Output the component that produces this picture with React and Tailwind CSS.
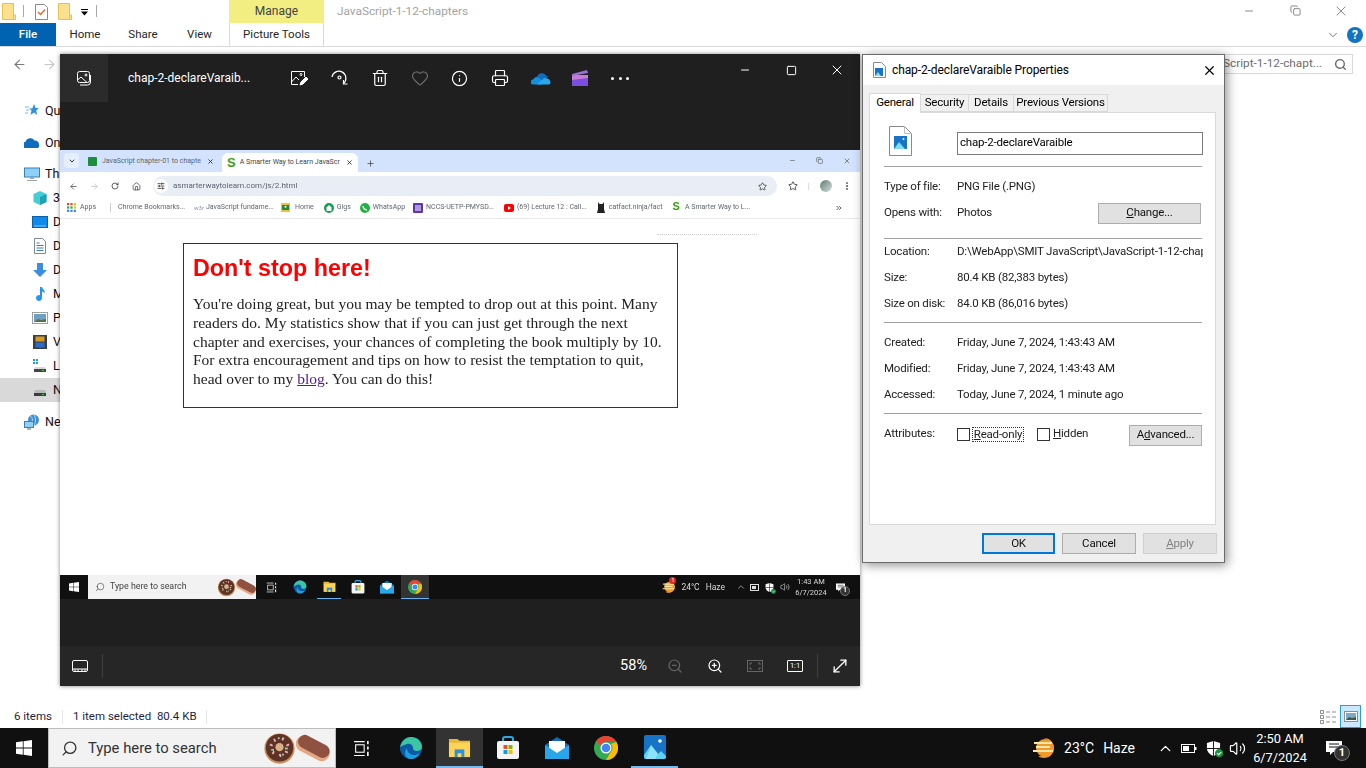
import { ArrowLeft, ArrowRight, Search, ChevronUp, ChevronDown, X, Minus, Square, Copy, RotateCw, House, Star, Plus, EllipsisVertical, ChevronsRight, Trash2, Heart, Info, Printer, ZoomIn, ZoomOut, MoveDiagonal, Volume2, SlidersHorizontal } from 'lucide-react';

const ui = "font-['Roboto',sans-serif]";

const navRows = [
  { label: 'Quick access', y: 'mt-[8px]', pad: 'pl-[24px]', icon: 'star' },
  { label: 'OneDrive', y: 'mt-[8px]', pad: 'pl-[24px]', icon: 'cloud' },
  { label: 'This PC', y: 'mt-[7px]', pad: 'pl-[24px]', icon: 'pc' },
  { label: '3D Objects', pad: 'pl-[32px]', icon: 'cube' },
  { label: 'Desktop', pad: 'pl-[32px]', icon: 'desktop' },
  { label: 'Documents', pad: 'pl-[32px]', icon: 'doc' },
  { label: 'Downloads', pad: 'pl-[32px]', icon: 'down' },
  { label: 'Music', pad: 'pl-[32px]', icon: 'music' },
  { label: 'Pictures', pad: 'pl-[32px]', icon: 'pics' },
  { label: 'Videos', pad: 'pl-[32px]', icon: 'video' },
  { label: 'Local Disk (C:)', pad: 'pl-[32px]', icon: 'local' },
  { label: 'New Volume (D:)', pad: 'pl-[32px]', icon: 'disk', active: true },
  { label: 'Network', y: 'mt-[8px]', pad: 'pl-[24px]', icon: 'net' },
];

function NavIcon({ name }) {
  const p = { width: 16, height: 16, viewBox: '0 0 16 16', className: 'shrink-0' };
  if (name === 'star') return <svg {...p}><path d="M10 1l1.600 4H15l-2.800 2.600 1 4.400L10 9.600 6.500 12l1-4.400L5 5.500h3.300z" fill="#2f8fe0" /><path d="M1 4h4M2 7h3M1 10h3" stroke="#7cb9ee" /></svg>;
  if (name === 'cloud') return <svg {...p}><path d="M1 13a3 3 0 0 1 .5-6 5 5 0 0 1 9-1.500A4 4 0 0 1 15 9.500 3 3 0 0 1 14 13z" fill="#0f6cbd" /></svg>;
  if (name === 'pc') return <svg {...p}><rect x="0.500" y="2" width="15" height="9" fill="#8fd0f5" stroke="#3a7fb5" /><path d="M6 11h4v2H6zM3 14h10v1H3z" fill="#9aa5ad" /></svg>;
  if (name === 'cube') return <svg {...p}><path d="M8 1l6.500 3v8L8 15l-6.500-3V4z" fill="#45cdd6" /><path d="M8 7l6.500-3v8L8 15z" fill="#1ea3b5" /></svg>;
  if (name === 'desktop') return <svg {...p}><rect x="0.500" y="2.500" width="15" height="11" fill="#0f8ae8" stroke="#0b5fa8" /><path d="M2 12h12" stroke="#7cc4f5" /></svg>;
  if (name === 'doc') return <svg {...p}><path d="M2.500.500h8l3 3v12h-11z" fill="#fff" stroke="#7d8a94" /><path d="M4.500 5h3M4.500 7.500h7M4.500 10h7M4.500 12.500h7" stroke="#3a7fb5" /></svg>;
  if (name === 'down') return <svg {...p}><path d="M5 1h6v7h4l-7 7-7-7h4z" fill="#3a8ee0" /></svg>;
  if (name === 'music') return <svg {...p}><path d="M8 1h2c.5 2.500 3 3 3 6-1-1-2-1.500-3-1.500V12a3 3 0 1 1-2-2.800z" fill="#2196f3" /></svg>;
  if (name === 'pics') return <svg {...p}><rect x="0.500" y="2.500" width="15" height="11" fill="#fff" stroke="#9aa0a6" /><rect x="2" y="4" width="12" height="8" fill="#6f9fc2" /><path d="M2 12l4-3 3 1 5-1v3z" fill="#55724a" /></svg>;
  if (name === 'video') return <svg {...p}><rect x="1" y="1" width="14" height="14" fill="#3b3f44" /><rect x="3.500" y="2.500" width="9" height="5" fill="#d89a22" /><rect x="3.500" y="8.500" width="9" height="5" fill="#2d6cc9" /></svg>;
  if (name === 'local') return <svg {...p}><path d="M1 1h2v2H1zM4 1h2v2H4zM1 4h2v2H1zM4 4h2v2H4z" fill="#1e9be8" /><path d="M3 9h10l1 2H2z" fill="#d8dadc" /><rect x="2" y="11" width="12" height="3" fill="#454545" /><rect x="10" y="12" width="2" height="1" fill="#3bd13b" /></svg>;
  if (name === 'disk') return <svg {...p}><path d="M3 8h10l1 3H2z" fill="#b8babc" /><rect x="2" y="11" width="12" height="3" fill="#3d3d3d" /><rect x="10" y="12" width="2" height="1" fill="#3bd13b" /></svg>;
  return <svg {...p}><circle cx="9.500" cy="6" r="5.500" fill="#3f8fd0" /><path d="M6 2c3 1 3 6 1 9M10 1c2 3 2 7 0 10" stroke="#b7dcf5" fill="none" /><rect x="0.500" y="7.500" width="9" height="6" fill="#8fd0f5" stroke="#3a7fb5" /><path d="M3 15h4" stroke="#666" /></svg>;
}

function FolderIcon({ className }) {
  return (
    <svg className={className} width="14" height="17" viewBox="0 0 14 17">
      <path d="M.5.500h11v16H.5z" fill="#fbe08f" stroke="#e8c24f" />
      <path d="M11.500 12h2v4.500h-2z" fill="#fbe08f" stroke="#e8c24f" />
    </svg>
  );
}

function Explorer() {
  return (
    <div className={`flex h-[728px] flex-col bg-white ${ui}`}>
      {/* title row */}
      <div className="flex h-[23px] items-start">
        <FolderIcon className="mt-[3px] ml-[2px]" />
        <div className="mt-[5px] ml-[7px] h-[12px] w-px bg-[#a8a8a8]" />
        <svg className="mt-[4px] ml-[11px]" width="13" height="16" viewBox="0 0 13 16">
          <path d="M.5.500h9l3 3v12H.5z" fill="#fff" stroke="#8a8a8a" />
          <path d="M3 8l2.500 2.500L10 5.500" fill="none" stroke="#e2622c" strokeWidth="1.300" />
        </svg>
        <FolderIcon className="mt-[3px] ml-[10px]" />
        <svg className="mt-[9px] ml-[9px]" width="8" height="7" viewBox="0 0 8 7">
          <path d="M0 0h7v1H0zM0 2.500h7L3.500 6.500z" fill="#000" />
        </svg>
        <div className="mt-[5px] ml-[7px] h-[12px] w-px bg-[#a8a8a8]" />
        <div className="ml-[132px] flex h-[23px] w-[95px] items-center justify-center bg-[#f2ee82] pb-[2px] text-[12px] text-[#444]">Manage</div>
        <div className="mt-[3px] ml-[13px] text-[11.800px] text-[#a3a3a3]">JavaScript-1-12-chapters</div>
        <div className="ml-auto mr-[2px] flex items-center text-[#8a8a8a]">
          <div className="flex h-[21px] w-[46px] items-center justify-center"><Minus size={12} strokeWidth={1} absoluteStrokeWidth /></div>
          <div className="flex h-[21px] w-[46px] items-center justify-center"><Copy size={11} strokeWidth={1} absoluteStrokeWidth /></div>
          <div className="flex h-[21px] w-[46px] items-center justify-center"><X size={16} strokeWidth={1} absoluteStrokeWidth /></div>
        </div>
      </div>
      {/* ribbon tabs */}
      <div className="flex h-[24px] items-center border-b border-[#dadada] text-[11.500px] text-[#262626]">
        <div className="flex h-[23px] w-[56px] items-center justify-center bg-[#0063b1] font-medium text-white">File</div>
        <div className="w-[58px] text-center">Home</div>
        <div className="w-[58px] text-center">Share</div>
        <div className="w-[55px] text-center">View</div>
        <div className="ml-[2px] flex h-[23px] w-[95px] items-center justify-center border-x border-[#dadada]">Picture Tools</div>
        <div className="ml-auto mr-[3px] flex items-center gap-[7px]">
          <ChevronDown size={14} strokeWidth={1} absoluteStrokeWidth color="#777" />
          <div className="flex h-[16px] w-[16px] items-center justify-center rounded-full bg-[#1273c4] text-[12px] font-bold text-white">?</div>
        </div>
      </div>
      {/* address row */}
      <div className="flex h-[34px] items-center">
        <ArrowLeft className="ml-[12px]" size={15} color="#7a7a7a" strokeWidth={1.800} />
        <ArrowRight className="ml-[15px]" size={15} color="#c8c8c8" strokeWidth={1.800} />
        <div className="mr-[13px] ml-auto flex h-[20px] w-[201px] items-center justify-between border border-[#d9d9d9] px-[5px] text-[11.800px] text-[#6d6d6d]">
          <span className="ml-[65px] whitespace-nowrap">Script-1-12-chapt...</span>
          <Search size={13} strokeWidth={2.500} color="#666" />
        </div>
      </div>
      {/* body */}
      <div className="flex min-h-0 flex-1">
        <div className="w-[220px] overflow-hidden pt-[10px] text-[12.500px] text-[#1a0a0a]">
          {navRows.map((r) => (
            <div key={r.label} className={`flex h-[24px] items-center gap-[5px] ${r.pad} ${r.y || ''} ${r.active ? 'bg-[#d9d9d9]' : ''}`}>
              <NavIcon name={r.icon} />
              <span className="whitespace-nowrap">{r.label}</span>
            </div>
          ))}
        </div>
      </div>
      {/* status bar */}
      <div className="flex h-[23px] items-center text-[11.500px] text-[#1f1f3f]">
        <span className="ml-[14px] w-[48px]">6 items</span>
        <div className="h-[14px] w-px bg-[#e6e6e6]" />
        <span className="ml-[10px] w-[133px] whitespace-nowrap">1 item selected&nbsp; 80.4 KB</span>
        <div className="h-[14px] w-px bg-[#e6e6e6]" />
        <div className="ml-auto flex items-center">
          <svg width="17" height="14" viewBox="0 0 17 14">
            <path d="M.5.500h3v3h-3zM.5 5.500h3v3h-3zM.5 10.500h3v3h-3z" fill="none" stroke="#8d8d8d" />
            <path d="M6 2h4M12 2h4M6 7h4M12 7h4M6 12h4M12 12h4" stroke="#8d8d8d" />
          </svg>
          <div className="mr-[5px] ml-[3px] flex h-[23px] w-[21px] items-center justify-center border border-[#26a0da] bg-[#cce8ff]">
            <svg width="14" height="11" viewBox="0 0 14 11">
              <rect x=".5" y=".5" width="13" height="10" fill="#fff" stroke="#8d8d8d" />
              <rect x="2" y="2" width="10" height="7" fill="#7fa9c4" />
              <path d="M2 9l3-3 3 1 4-1v3z" fill="#3f5a48" />
            </svg>
          </div>
        </div>
      </div>
    </div>
  );
}

function ImageIcon() {
  return (
    <svg width="16" height="16" viewBox="0 0 16 16" fill="none" stroke="#fff">
      <rect x="1.500" y="1.500" width="12" height="11" rx="2" />
      <circle cx="10" cy="5" r="1" />
      <path d="M1.500 10l3.500-3 6 5.500M14.500 5v7a3 3 0 0 1-3 3H4" />
    </svg>
  );
}

function BlueS({ size = 12 }) {
  return <span className="font-['Liberation_Sans',sans-serif] font-bold leading-none text-[#3aa00f]" style={{ fontSize: size }}>S</span>;
}

function BookmarkIcon({ kind }) {
  if (kind === 'home') return (
    <svg width="9" height="9" viewBox="0 0 9 9"><rect width="9" height="9" fill="#f3c22c" /><rect x="1" y="2" width="7" height="5" fill="#1e8e3e" /><circle cx="4.500" cy="3.800" r="1" fill="#fff" /></svg>
  );
  if (kind === 'gigs') return (
    <svg width="10" height="10" viewBox="0 0 10 10"><circle cx="5" cy="5" r="5" fill="#12a150" /><path d="M5 2l2.500 2.500V8h-5V4.500z" fill="#fff" /></svg>
  );
  if (kind === 'wa') return (
    <svg width="10" height="10" viewBox="0 0 10 10"><circle cx="5" cy="5" r="5" fill="#1fb141" /><path d="M3 3c0 2 2 4 4 4" stroke="#fff" strokeWidth="1.300" fill="none" /></svg>
  );
  if (kind === 'nccs') return (
    <svg width="10" height="10" viewBox="0 0 10 10"><rect width="10" height="10" rx="1" fill="#5e35b1" /><path d="M2 3h6M2 5h6M2 7h6" stroke="#fff" /></svg>
  );
  if (kind === 'yt') return (
    <svg width="10" height="8" viewBox="0 0 10 8"><rect width="10" height="8" rx="2" fill="#f00" /><path d="M4 2l3 2-3 2z" fill="#fff" /></svg>
  );
  return (
    <svg width="8" height="11" viewBox="0 0 8 11"><path d="M1 0l1.500 2h3L7 0v7l1 4H0l1-4z" fill="#222" /></svg>
  );
}

const bookmarks = [
  { t: 'Home', k: 'home', w: 'ml-[9px]', g: 'mr-[5px]' },
  { t: 'Gigs', k: 'gigs', w: 'ml-[10px]', g: 'mr-[3px]' },
  { t: 'WhatsApp', k: 'wa', w: 'ml-[9px]', g: 'mr-[3px]' },
  { t: 'NCCS-UETP-PMYSD...', k: 'nccs', w: 'ml-[8px]', g: 'mr-[3px]' },
  { t: '(69) Lecture 12 : Call...', k: 'yt', w: 'ml-[10px]', g: 'mr-[3px]' },
  { t: 'catfact.ninja/fact', k: 'cat', w: 'ml-[10px]', g: 'mr-[4px]' },
];

function ChromeShot() {
  return (
    <div className="flex flex-col bg-white">
      <div className="flex flex-col blur-[0.3px]">
        <div className="flex h-[22px] items-end bg-[#d3e3fd] pl-[4px] text-[7px] whitespace-nowrap text-[#5a6470]">
          <div className="mb-[4px] flex h-[15px] w-[15px] items-center justify-center rounded-[4px] bg-[#e6eefc]"><ChevronDown size={8} color="#333" strokeWidth={3} /></div>
          <div className="mb-[3px] flex h-[15px] w-[143px] items-center pr-[8px] pl-[9px]">
            <span className="mr-[5px] h-[9px] w-[9px] shrink-0 rounded-[1px] bg-[#1e8e3e]" />
            <span>JavaScript chapter-01 to chapte</span>
            <X className="ml-auto shrink-0" size={7} color="#333" strokeWidth={3} />
          </div>
          <div className="flex h-[19px] w-[136px] items-center rounded-t-[6px] bg-white pr-[5px] pl-[5px] text-[#444]">
            <BlueS size={13} />
            <span className="ml-[4px]">A Smarter Way to Learn JavaScr</span>
            <X className="ml-auto shrink-0" size={7} color="#333" strokeWidth={3} />
          </div>
          <Plus className="mb-[4px] ml-[8px]" size={9} color="#444" strokeWidth={2} />
          <div className="mb-[4px] ml-auto flex h-[15px] items-center text-[#555]">
            <Minus size={7} strokeWidth={2} />
            <Copy className="ml-[20px]" size={7} strokeWidth={2} />
            <X className="mr-[9px] ml-[20px]" size={8} strokeWidth={2} />
          </div>
        </div>
        <div className="flex h-[24px] items-center pt-[4px] text-[#444]">
          <ArrowLeft className="ml-[9px]" size={9} strokeWidth={2} />
          <ArrowRight className="ml-[12px]" size={9} color="#bbb" strokeWidth={2} />
          <RotateCw className="ml-[12px]" size={8} strokeWidth={2.500} />
          <House className="ml-[13px]" size={9} strokeWidth={2} />
          <div className="ml-[12px] flex h-[20px] w-[624px] items-center rounded-full bg-[#e9edf6] pr-[10px] pl-[1px] text-[8px] text-[#5c6470]">
            <span className="mr-[5px] flex h-[14px] w-[14px] items-center justify-center rounded-full bg-white"><SlidersHorizontal size={8} color="#333" strokeWidth={2.500} /></span>
            <span>asmarterwaytolearn.com/js/2.html</span>
            <Star className="ml-auto" size={9} color="#333" strokeWidth={2} />
          </div>
          <Star className="ml-[11px]" size={10} color="#333" strokeWidth={2} />
          <div className="ml-[10px] h-[7px] w-px bg-[#d5dfee]" />
          <div className="ml-[11px] h-[12px] w-[12px] rounded-full bg-gradient-to-br from-[#5f7d6b] to-[#d8dfe6]" />
          <EllipsisVertical className="ml-[10px]" size={10} strokeWidth={2.500} />
        </div>
        <div className="flex h-[23px] items-center border-b border-[#e8e8e8] pt-[2px] pb-[1px] pl-[7px] text-[7px] whitespace-nowrap text-[#5e6670]">
          <svg width="9" height="9" viewBox="0 0 8 8">
            <g fill="#ea4335"><rect width="2" height="2" /><rect x="3" width="2" height="2" /></g>
            <rect x="6" width="2" height="2" fill="#fbbc04" />
            <g fill="#34a853"><rect y="3" width="2" height="2" /><rect x="3" y="3" width="2" height="2" /></g>
            <rect x="6" y="3" width="2" height="2" fill="#fbbc04" />
            <g fill="#4285f4"><rect y="6" width="2" height="2" /><rect x="3" y="6" width="2" height="2" /><rect x="6" y="6" width="2" height="2" /></g>
          </svg>
          <span className="ml-[4px] w-[16px]">Apps</span>
          <div className="ml-[14px] h-[9px] w-px bg-[#ccc]" />
          <span className="ml-[7px] w-[66px]">Chrome Bookmarks...</span>
          <span className="ml-[10px] w-[12px] text-[6px] text-[#8a8fb8]">w3r</span>
          <span className="w-[66px]">JavaScript fundame...</span>
          {bookmarks.map((b) => (
            <span key={b.t} className={`flex items-center ${b.w}`}>
              <span className={`flex ${b.g}`}><BookmarkIcon kind={b.k} /></span>
              {b.t}
            </span>
          ))}
          <span className="mr-[5px] ml-[10px]"><BlueS size={11} /></span>
          <span>A Smarter Way to L...</span>
          <ChevronsRight className="mr-[17px] ml-auto" size={8} color="#444" strokeWidth={2.500} />
        </div>
      </div>
      <div className="relative h-[356px]">
        <div className="absolute top-[15px] left-[597px] w-[100px] border-t border-dotted border-[#cfcfcf]" />
        <div className="mt-[24px] ml-[123px] w-[495px] border border-[#333] pt-[9px] pb-[18px] pl-[9px]">
          <div className="font-['Liberation_Sans',sans-serif] text-[23.300px] leading-[30px] font-bold text-[#f00]">Don&apos;t stop here!</div>
          <p className="mt-[12px] font-['Liberation_Serif',serif] text-[15.500px] leading-[18.800px] text-[#222]">
            You&apos;re doing great, but you may be tempted to drop out at this point. Many<br />
            readers do. My statistics show that if you can just get through the next<br />
            chapter and exercises, your chances of completing the book multiply by 10.<br />
            For extra encouragement and tips on how to resist the temptation to quit,<br />
            head over to my <span className="text-[#551a8b] underline">blog</span>. You can do this!
          </p>
        </div>
      </div>
      <MiniTaskbar />
    </div>
  );
}

function Donut({ s = 22 }) {
  return (
    <svg width={s} height={s} viewBox="0 0 24 24">
      <circle cx="12" cy="12" r="11" fill="#c98f5c" />
      <circle cx="12" cy="11.500" r="10" fill="#5c3324" />
      <circle cx="12" cy="11" r="3" fill="#d9b08a" />
      <path d="M5 9l2 1M8 5l1 2M15 4l-1 2M19 9l-2 1M18 15l-2-1M13 18l-1-2M7 16l1-2" stroke="#f4b0c0" strokeWidth="1.300" />
      <path d="M6 13l2 0M11 4l1 1M18 12l-2 0M15 17l-1-1" stroke="#8fd0a0" strokeWidth="1.300" />
    </svg>
  );
}

function Bar({ s = 28 }) {
  return (
    <svg width={s} height={s} viewBox="0 0 28 28">
      <rect x="-1" y="8" width="30" height="13" rx="6.500" transform="rotate(28 14 14)" fill="#e6a884" />
      <rect x="0" y="7" width="28" height="11" rx="5.500" transform="rotate(28 14 14)" fill="#8f5240" />
    </svg>
  );
}

function Edge({ s }) {
  return (
    <svg width={s} height={s} viewBox="0 0 24 24">
      <circle cx="12" cy="12" r="11" fill="#0c59a4" />
      <path d="M1 12C2 5 7 1 12 1c6 0 11 4 11 10 0 3-3 4-5 4-3 0-4-1-4-3 0-3-3-5-6-4-4 1-7 3-7 4z" fill="#3cc5a5" />
      <path d="M8 12c0 4 3 7 7 7 2 0 4-.5 6-2-2 4-6 6-9 6-3 0-6-2-6-6 0-2 1-4 2-5z" fill="#1b9de2" />
    </svg>
  );
}

function ExplorerIcon({ s }) {
  return (
    <svg width={s} height={s} viewBox="0 0 24 24">
      <path d="M1 3h9l2 2h11v3H1z" fill="#e9b73c" />
      <path d="M1 7h22v15H1z" fill="#fbd458" />
      <path d="M7 14h10v8H7z" fill="#2f8fd8" />
      <path d="M10 18h4v4h-4z" fill="#fbd458" />
    </svg>
  );
}

function StoreIcon({ s }) {
  return (
    <svg width={s} height={s} viewBox="0 0 24 24">
      <path d="M7 6V3a2 2 0 0 1 2-2h6a2 2 0 0 1 2 2v3" fill="none" stroke="#29a8e6" strokeWidth="2" />
      <rect x="1" y="5" width="22" height="18" rx="2" fill="#f4f4f4" />
      <rect x="7.500" y="9" width="4" height="4" fill="#f25022" />
      <rect x="12.500" y="9" width="4" height="4" fill="#7fba00" />
      <rect x="7.500" y="14" width="4" height="4" fill="#00a4ef" />
      <rect x="12.500" y="14" width="4" height="4" fill="#ffb900" />
    </svg>
  );
}

function MailIcon({ s }) {
  return (
    <svg width={s} height={s} viewBox="0 0 24 24">
      <path d="M12 1L24 9v14H0V9z" fill="#0f6cbd" />
      <path d="M4 5h16v9l-8 5-8-5z" fill="#fff" />
      <path d="M0 9l12 8 12-8v14H0z" fill="#28a8ea" />
    </svg>
  );
}

function ChromeIcon({ s }) {
  return (
    <svg width={s} height={s} viewBox="0 0 24 24">
      <circle cx="12" cy="12" r="12" fill="#34a853" />
      <path d="M12 0a12 12 0 0 1 10.400 6H12a6 6 0 0 0-5.600 3.800L2.300 5A12 12 0 0 1 12 0z" fill="#ea4335" />
      <path d="M22.400 6A12 12 0 0 1 12 24l5-8.500A6 6 0 0 0 17 8z" fill="#fbbc04" />
      <circle cx="12" cy="12" r="5.500" fill="#fff" />
      <circle cx="12" cy="12" r="4.300" fill="#4285f4" />
    </svg>
  );
}

function PhotosIcon({ s }) {
  return (
    <svg width={s} height={s} viewBox="0 0 24 24">
      <rect x="1" y="0" width="22" height="24" rx="2" fill="#1673c5" />
      <circle cx="17" cy="6" r="1.800" fill="#fff" />
      <path d="M1 20l7-10 7 9 3-3 5 5v1a2 2 0 0 1-2 2H3a2 2 0 0 1-2-2z" fill="#5dd3f3" />
      <path d="M8 10l7 9-3 5H3z" fill="#8ce3fa" />
    </svg>
  );
}

function WinLogo({ s }) {
  return (
    <svg width={s} height={s} viewBox="0 0 16 16" fill="#fff">
      <path d="M0 2.300l6.800-1v6.300H0zM7.600 1.200L16 0v7.600H7.600zM0 8.400h6.800v6.300l-6.800-1zM7.600 8.400H16V16l-8.400-1.200z" />
    </svg>
  );
}

function Weather({ s, badge }) {
  return (
    <span className="relative inline-flex">
      <svg width={s} height={s} viewBox="0 0 24 24">
        <path d="M12 2a10 10 0 1 1-6 18h8A10 10 0 0 0 12 2z" fill="#f09a2a" />
        <circle cx="13" cy="12" r="9" fill="#f09a2a" />
        <path d="M2 7h18M4 11h14M1 15h20" stroke="#fbe6a5" strokeWidth="2" />
      </svg>
      {badge && <span className="absolute -top-[3px] right-0 flex h-[7px] w-[7px] items-center justify-center rounded-full bg-[#d92b2b] text-[5px] text-white">1</span>}
    </span>
  );
}

function Shield({ s }) {
  return (
    <span className="relative inline-flex">
      <svg width={s} height={s} viewBox="0 0 16 16">
        <path d="M8 0l7 2v6c0 4-4 7-7 8-3-1-7-4-7-8V2z" fill="#fff" />
        <path d="M8 0v16M1 8h14" stroke="#101010" />
      </svg>
      <svg className="absolute right-[-2px] bottom-[-2px]" width={s * 0.55} height={s * 0.55} viewBox="0 0 8 8">
        <circle cx="4" cy="4" r="4" fill="#14933f" />
        <path d="M2 4l1.500 1.500L6 3" stroke="#fff" fill="none" />
      </svg>
    </span>
  );
}

function Notify({ s, big }) {
  return (
    <span className="relative inline-flex">
      <svg width={s} height={s} viewBox="0 0 16 16" fill="#fff">
        <path d="M0 1h16v11H7l-3 3v-3H0z" />
        <path d="M3 4h10M3 7h10" stroke="#101010" />
      </svg>
      <span className={`absolute flex items-center justify-center rounded-full border border-[#777] bg-[#333] font-bold text-white ${big ? 'right-[-8px] bottom-[-5px] h-[16px] w-[16px] text-[11px]' : 'right-[-5px] bottom-[-4px] h-[10px] w-[10px] text-[7px]'}`}>1</span>
    </span>
  );
}

function MiniTaskbar() {
  return (
    <div className={`flex h-[24px] items-center bg-[#101010] text-[#d8d8d8] blur-[0.3px] ${ui}`}>
      <div className="flex w-[28px] justify-center"><WinLogo s={10} /></div>
      <div className="flex h-[24px] w-[168px] items-center bg-[#f2f2f2] pl-[7px] text-[8.800px] text-[#444]">
        <Search size={10} strokeWidth={1.500} className="-scale-x-100" />
        <span className="ml-[5px]">Type here to search</span>
        <span className="ml-auto flex items-center"><Donut s={19} /><Bar s={20} /></span>
      </div>
      <div className="ml-[3px] flex w-[24px] justify-center"><TaskView s={11} /></div>
      <div className="ml-[4px] flex w-[26px] justify-center"><Edge s={14} /></div>
      <div className="ml-[4px] flex h-[24px] w-[24px] items-center justify-center border-b border-[#64b5f6]"><ExplorerIcon s={13} /></div>
      <div className="ml-[4px] flex w-[26px] justify-center"><StoreIcon s={14} /></div>
      <div className="ml-[3px] flex w-[26px] justify-center"><MailIcon s={14} /></div>
      <div className="ml-[1px] flex h-[24px] w-[28px] items-center justify-center border-b border-[#64b5f6] bg-[#333]"><ChromeIcon s={14} /></div>
      <div className="ml-auto flex items-center whitespace-nowrap text-[8.500px]">
        <Weather s={14} badge />
        <span className="ml-[5px]">24°C</span>
        <span className="ml-[6px]">Haze</span>
        <ChevronUp className="ml-[11px]" size={10} strokeWidth={1.500} />
        <svg className="ml-[4px]" width="10" height="7" viewBox="0 0 10 7"><rect x=".5" y=".5" width="8" height="6" fill="none" stroke="#ddd" /><rect x="2" y="2" width="4" height="3" fill="#ddd" /></svg>
        <span className="ml-[5px] inline-flex"><Shield s={9} /></span>
        <Volume2 className="ml-[6px]" size={10} strokeWidth={1.500} />
        <div className="ml-[4px] w-[34px] text-center text-[7.500px] leading-[11px]">1:43 AM<br />6/7/2024</div>
        <span className="mr-[15px] ml-[8px] inline-flex"><Notify s={9} /></span>
      </div>
    </div>
  );
}

function TaskView({ s }) {
  return (
    <svg width={s} height={s} viewBox="0 0 16 16" fill="none" stroke="#fff">
      <path d="M1 1.500h10M1 14.500h10" />
      <rect x="2.500" y="4.500" width="8" height="7" />
      <path d="M14 1v3M14 6v3M14 11v4" strokeWidth="1.500" />
    </svg>
  );
}

function PhotoWindow() {
  return (
    <div className={`absolute top-[54px] left-[60px] flex h-[632px] w-[800px] flex-col bg-[#1f1f1f] text-white shadow-[0_0_4px_rgba(0,0,0,0.5)] ${ui}`}>
      <div className="flex h-[48px] shrink-0 items-center">
        <div className="flex h-[48px] w-[48px] items-center justify-center bg-[#2b2b2b]"><ImageIcon /></div>
        <span className="ml-[20px] w-[161px] text-[12px] whitespace-nowrap">chap-2-declareVaraib...</span>
        <div className="flex w-[20px] justify-center">
          <svg width="18" height="18" viewBox="0 0 18 18" fill="none" stroke="#fff">
            <path d="M8 15.500H1.500v-13h13V8" />
            <circle cx="11" cy="5.500" r="1" />
            <path d="M1.500 13L6 8l3 3" />
            <path d="M10 16l1-3 5-5 2 2-5 5z" fill="#fff" />
          </svg>
        </div>
        <div className="ml-[21px] flex w-[20px] justify-center">
          <svg width="18" height="18" viewBox="0 0 18 18" fill="none" stroke="#fff" strokeWidth="1.200">
            <path d="M1 8a7 7 0 1 1 11.500 6.500" />
            <circle cx="8.500" cy="8.500" r="1.500" />
            <path d="M12.500 11v4h4" />
          </svg>
        </div>
        <Trash2 className="ml-[21px]" size={18} strokeWidth={1.200} absoluteStrokeWidth />
        <Heart className="ml-[22px]" size={18} strokeWidth={1.200} absoluteStrokeWidth color="#6a6a6a" />
        <Info className="ml-[22px]" size={17} strokeWidth={1.200} absoluteStrokeWidth />
        <Printer className="ml-[23px]" size={18} strokeWidth={1.200} absoluteStrokeWidth />
        <svg className="ml-[22px]" width="20" height="14" viewBox="0 0 20 14">
          <path d="M6 6a5 5 0 0 1 9-1.500 4 4 0 0 1 2 1.500L8 10z" fill="#0f6cbd" />
          <path d="M2 13.500a2.500 2.500 0 0 1 .5-5C3 6 6 5 8 7l5 3-3 3.500z" fill="#1490df" />
          <path d="M6 13.500L13 7c3-.5 6 1 6.500 4 0 2-1 2.500-2 2.500z" fill="#28a8ea" />
        </svg>
        <svg className="ml-[21px]" width="16" height="16" viewBox="0 0 16 16">
          <rect y="5" width="16" height="11" fill="#7a4fe0" />
          <path d="M0 5h16v3L0 10z" fill="#c77bd8" />
          <path d="M0 4L15 0l1 3L0 6z" fill="#9b6fd8" />
        </svg>
        <div className="ml-[23px] flex w-[18px] justify-between">
          <span className="h-[3px] w-[3px] rounded-full bg-white" />
          <span className="h-[3px] w-[3px] rounded-full bg-white" />
          <span className="h-[3px] w-[3px] rounded-full bg-white" />
        </div>
        <div className="ml-auto flex self-start">
          <div className="flex h-[32px] w-[46px] items-center justify-center"><Minus size={12} strokeWidth={1} absoluteStrokeWidth /></div>
          <div className="flex h-[32px] w-[46px] items-center justify-center"><Square size={11} strokeWidth={1} absoluteStrokeWidth /></div>
          <div className="flex h-[32px] w-[46px] items-center justify-center"><X size={16} strokeWidth={1} absoluteStrokeWidth /></div>
        </div>
      </div>
      <div className="h-[48px] shrink-0" />
      <div className="shrink-0"><ChromeShot /></div>
      <div className="min-h-0 flex-1" />
      <div className="flex h-[40px] shrink-0 items-center bg-[#262626]">
        <svg className="ml-[12px]" width="16" height="12" viewBox="0 0 16 12" fill="none" stroke="#fff">
          <rect x=".5" y=".5" width="15" height="11" rx="1.500" />
          <path d="M.5 9h15M3 9v2.500M6 9v2.500M10 9v2.500M13 9v2.500" />
        </svg>
        <div className="ml-[14px] h-[24px] w-px bg-[#3f3f3f]" />
        <span className="ml-auto text-[14.500px]">58%</span>
        <ZoomOut className="ml-[20px]" size={16} strokeWidth={1.200} absoluteStrokeWidth color="#666" />
        <ZoomIn className="ml-[24px]" size={16} strokeWidth={1.200} absoluteStrokeWidth />
        <svg className="ml-[24px]" width="16" height="12" viewBox="0 0 16 12" fill="none" stroke="#666">
          <rect x=".5" y=".5" width="15" height="11" />
          <path d="M3 5V3h2M11 3h2v2M3 7v2h2M11 9h2V7" />
        </svg>
        <div className="ml-[24px] flex h-[12px] w-[16px] items-center justify-center rounded-[1px] border border-white text-[7.500px] leading-none">1:1</div>
        <div className="ml-[14px] h-[24px] w-px bg-[#3f3f3f]" />
        <MoveDiagonal className="mr-[10px] ml-[12px]" size={20} strokeWidth={1.300} absoluteStrokeWidth />
      </div>
    </div>
  );
}

function WinButton({ children, className = '', primary, disabled }) {
  return (
    <div className={`flex h-[21px] items-center justify-center border text-[#111] ${primary ? 'border-2 border-[#0078d7] bg-[#e1e1e1]' : 'border-[#adadad] bg-[#e1e1e1]'} ${disabled ? 'border-[#cfcfcf] bg-[#ccc] !text-[#838383]' : ''} ${className}`}>
      {children}
    </div>
  );
}

function PropRow({ label, value, h = 'h-[26px]', children }) {
  return (
    <div className={`flex items-center pr-[12px] ${h}`}>
      <span className="w-[73px] shrink-0">{label}</span>
      <span className="overflow-hidden whitespace-nowrap">{value}</span>
      {children}
    </div>
  );
}

function Sep({ className = '' }) {
  return <div className={`mr-[13px] h-px bg-[#a0a0a0] ${className}`} />;
}

function Properties() {
  return (
    <div className={`absolute top-[54px] left-[862px] flex h-[509px] w-[363px] flex-col border border-[#6b6b6b] bg-[#f0f0f0] text-[11.500px] tracking-[-0.2px] text-[#000] shadow-[2px_2px_10px_rgba(0,0,0,0.45)] ${ui}`}>
      <div className="flex h-[30px] shrink-0 items-center bg-white pl-[10px]">
        <svg width="13" height="16" viewBox="0 0 13 16">
          <path d="M.5.500h8l4 4v11H.5z" fill="#fff" stroke="#8a8a8a" />
          <rect x="2" y="6" width="8" height="8" fill="#1673c5" />
          <path d="M2 14l3-4 3 4z" fill="#7fdcf5" />
        </svg>
        <span className="ml-[6px] text-[12px] tracking-[-0.1px]">chap-2-declareVaraible Properties</span>
        <X className="mr-[7px] ml-auto" size={15} strokeWidth={1.200} absoluteStrokeWidth />
      </div>
      <div className="mt-[7px] flex h-[20px] shrink-0 items-end pl-[6px] whitespace-nowrap">
        <div className="z-10 -mb-px flex h-[20px] w-[52px] items-center justify-center border border-b-0 border-[#d9d9d9] bg-white pb-[2px]">General</div>
        <div className="flex h-[18px] w-[48px] items-center justify-center border-y border-r border-[#d9d9d9]">Security</div>
        <div className="flex h-[18px] w-[45px] items-center justify-center border-y border-r border-[#d9d9d9]">Details</div>
        <div className="flex h-[18px] w-[94px] items-center justify-center border-y border-r border-[#d9d9d9]">Previous Versions</div>
      </div>
      <div className="ml-[6px] h-[413px] w-[347px] shrink-0 border border-[#d9d9d9] bg-white pl-[14px] text-[#222]">
        <div className="flex h-[53px] items-start pt-[13px]">
          <svg className="ml-[5px]" width="23" height="30" viewBox="0 0 23 30">
            <path d="M.5.500h15l7 7v22H.5z" fill="#fff" stroke="#8a8a8a" />
            <path d="M15.500.500v7h7" fill="none" stroke="#c0c0c0" />
            <rect x="5" y="10" width="13" height="13" fill="#1673c5" />
            <path d="M5 23l5-7 6 7z" fill="#7fdcf5" />
            <circle cx="14.500" cy="13" r="1" fill="#fff" />
          </svg>
          <div className="mt-[6px] ml-[45px] flex h-[23px] w-[246px] items-center border border-[#7a7a7a] pb-[2px] pl-[2px] text-black">chap-2-declareVaraible</div>
        </div>
        <Sep />
        <div className="mt-[7px]">
          <PropRow label="Type of file:" value="PNG File (.PNG)" />
          <PropRow label="Opens with:" value="Photos">
            <WinButton className="mr-[2px] ml-auto w-[103px] shrink-0"><span><u>C</u>hange...</span></WinButton>
          </PropRow>
        </div>
        <Sep className="mt-[12px]" />
        <PropRow label="Location:" value="D:\WebApp\SMIT JavaScript\JavaScript-1-12-chapters" />
        <PropRow label="Size:" value="80.4 KB (82,383 bytes)" />
        <PropRow label="Size on disk:" value="84.0 KB (86,016 bytes)" />
        <Sep className="mt-[5px]" />
        <div className="mt-[7px]">
          <PropRow label="Created:" value="Friday, June 7, 2024, 1:43:43 AM" />
          <PropRow label="Modified:" value="Friday, June 7, 2024, 1:43:43 AM" />
          <PropRow label="Accessed:" value="Today, June 7, 2024, 1 minute ago" />
        </div>
        <Sep className="mt-[5px]" />
        <div className="mt-[10px] flex h-[22px] items-center">
          <span className="mb-[2px] w-[73px] shrink-0">Attributes:</span>
          <span className="mb-[2px] h-[13px] w-[13px] border border-[#333]" />
          <span className="mb-[2px] ml-[2px] w-[52px] border border-dotted border-[#333] text-center leading-[13px] whitespace-nowrap"><u>R</u>ead-only</span>
          <span className="mb-[2px] ml-[13px] h-[13px] w-[13px] border border-[#333]" />
          <span className="mb-[2px] ml-[3px]"><u>H</u>idden</span>
          <WinButton className="mr-[13px] ml-auto w-[73px]"><span>A<u>d</u>vanced...</span></WinButton>
        </div>
      </div>
      <div className="mt-[8px] flex justify-end gap-[7px] pr-[7px]">
        <WinButton primary className="w-[73px]">OK</WinButton>
        <WinButton className="w-[74px]">Cancel</WinButton>
        <WinButton disabled className="w-[74px]"><span><u>A</u>pply</span></WinButton>
      </div>
    </div>
  );
}

function Taskbar() {
  return (
    <div className={`flex h-[40px] items-center bg-[#101010] text-white ${ui}`}>
      <div className="flex h-[40px] w-[48px] items-center justify-center"><WinLogo s={16} /></div>
      <div className="flex h-[40px] w-[288px] items-center border border-[#bdbdbd] bg-[#f2f2f2] pl-[12px] text-[14.800px] text-[#333]">
        <Search size={17} strokeWidth={1.300} absoluteStrokeWidth className="-scale-x-100" />
        <span className="ml-[10px]">Type here to search</span>
        <span className="ml-auto flex items-center pr-[5px]"><Donut s={33} /><Bar s={34} /></span>
      </div>
      <div className="ml-[15px] flex w-[20px] justify-center"><TaskView s={17} /></div>
      <div className="ml-[16px] flex h-[40px] w-[48px] items-center justify-center"><Edge s={24} /></div>
      <div className="ml-[1px] flex h-[40px] w-[47px] items-center justify-center border-b-2 border-[#76b9ed] bg-[#333]"><ExplorerIcon s={23} /></div>
      <div className="ml-[1px] flex w-[48px] justify-center"><StoreIcon s={24} /></div>
      <div className="flex w-[49px] justify-center"><MailIcon s={24} /></div>
      <div className="flex w-[49px] justify-center"><ChromeIcon s={24} /></div>
      <div className="ml-[1px] flex h-[40px] w-[47px] items-center justify-center border-b-2 border-[#76b9ed]"><PhotosIcon s={24} /></div>
      <div className="ml-auto flex items-center whitespace-nowrap text-[14px]">
        <Weather s={24} />
        <span className="ml-[8px]">23°C</span>
        <span className="ml-[9px]">Haze</span>
        <ChevronUp className="ml-[22px]" size={17} strokeWidth={1.300} absoluteStrokeWidth />
        <svg className="ml-[7px]" width="16" height="11" viewBox="0 0 16 11"><rect x=".5" y="1.500" width="13" height="8" fill="none" stroke="#fff" /><rect x="2" y="3" width="6" height="5" fill="#fff" /><rect x="14" y="4" width="1.500" height="3" fill="#fff" /></svg>
        <span className="ml-[9px] inline-flex"><Shield s={15} /></span>
        <Volume2 className="ml-[8px]" size={17} strokeWidth={1.200} absoluteStrokeWidth />
        <div className="ml-[3px] w-[62px] text-center text-[12.800px] leading-[19px]">2:50 AM<br />6/7/2024</div>
        <span className="mr-[24px] ml-[15px] inline-flex"><Notify s={16} big /></span>
      </div>
    </div>
  );
}

export default function App() {
  return (
    <div className="relative h-[768px] w-[1366px] overflow-hidden bg-white">
      <Explorer />
      <Taskbar />
      <PhotoWindow />
      <Properties />
    </div>
  );
}
